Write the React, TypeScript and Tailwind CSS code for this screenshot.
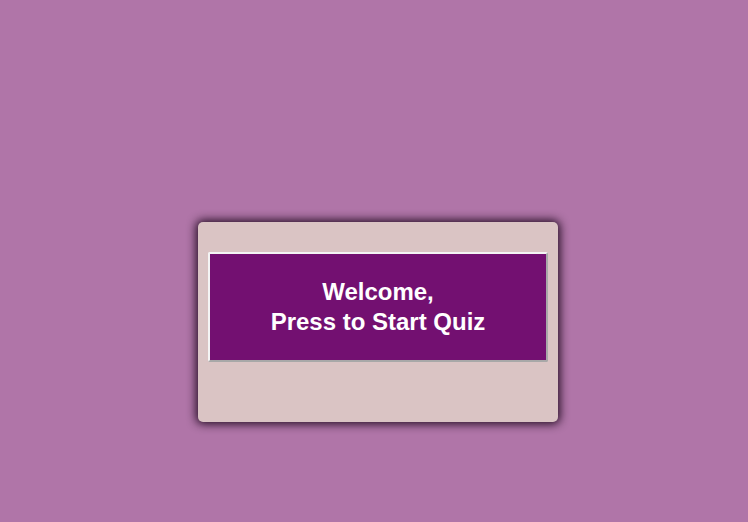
import React from "react";

export default function App() {
  return (
    <div className="w-[748px] h-[522px] bg-[#b075a8] overflow-hidden pt-[222px] pl-[198px]" style={{ fontFamily: '"Liberation Sans", Arial, sans-serif' }}>
      <div className="w-[360px] h-[200px] bg-[#dac4c4] rounded-[5px] shadow-[0_0_10px_2px_rgba(20,0,20,0.9)] pt-[30px] pl-[10px]">
        <button className="w-[340px] h-[110px] bg-[#731071] text-white font-bold text-[24px] leading-[30px] border-2 border-t-[#f4f4f4] border-l-[#f4f4f4] border-r-[#a8a8a8] border-b-[#a8a8a8] rounded-[2px] flex flex-col items-center justify-center">
          <span>Welcome,</span>
          <span>Press to Start Quiz</span>
        </button>
      </div>
    </div>
  );
}
